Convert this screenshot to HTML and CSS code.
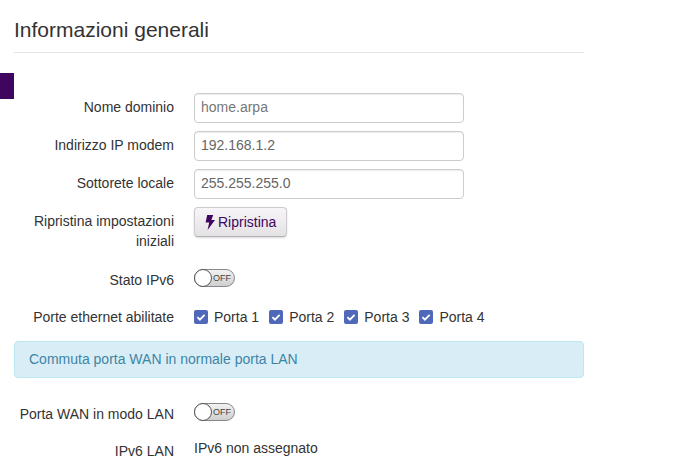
FILE: index.html
```html
<!DOCTYPE html>
<html lang="en">
<head>
    <meta charset="UTF-8">
    <meta name="viewport" content="width=device-width, initial-scale=1.0">
    <title>Informazioni generali</title>
    <link rel="stylesheet" href="styles.css">
</head>
<body>
    <div class="side-tab"></div>
    <div class="content">
        <h2 class="title">Informazioni generali</h2>
        <form class="form">
            <div class="row">
                <label class="label">Nome dominio</label>
                <input class="input" type="text" placeholder="home.arpa">
            </div>
            <div class="row">
                <label class="label">Indirizzo IP modem</label>
                <input class="input" type="text" value="192.168.1.2">
            </div>
            <div class="row">
                <label class="label">Sottorete locale</label>
                <input class="input" type="text" value="255.255.255.0">
            </div>
            <div class="row">
                <label class="label">Ripristina impostazioni iniziali</label>
                <button class="btn" type="button">
                    <svg class="bolt" viewBox="0 0 10 15" width="10" height="15"><path d="M2.2 0h6L6.4 5H10L2.6 15l1.6-7.4H0.6z"/></svg>
                    Ripristina
                </button>
            </div>
            <div class="row toggle-row">
                <label class="label">Stato IPv6</label>
                <div class="toggle"><span class="knob"></span><span class="off">OFF</span></div>
            </div>
            <div class="row ports-row">
                <label class="label">Porte ethernet abilitate</label>
                <div class="ports">
                    <span class="port"><svg class="check" viewBox="0 0 14 14" width="14" height="14"><rect width="14" height="14" rx="2"/><path d="M3.4 7.2l2.5 2.5 4.7-4.8"/></svg>Porta 1</span>
                    <span class="port"><svg class="check" viewBox="0 0 14 14" width="14" height="14"><rect width="14" height="14" rx="2"/><path d="M3.4 7.2l2.5 2.5 4.7-4.8"/></svg>Porta 2</span>
                    <span class="port"><svg class="check" viewBox="0 0 14 14" width="14" height="14"><rect width="14" height="14" rx="2"/><path d="M3.4 7.2l2.5 2.5 4.7-4.8"/></svg>Porta 3</span>
                    <span class="port"><svg class="check" viewBox="0 0 14 14" width="14" height="14"><rect width="14" height="14" rx="2"/><path d="M3.4 7.2l2.5 2.5 4.7-4.8"/></svg>Porta 4</span>
                </div>
            </div>
            <div class="alert">Commuta porta WAN in normale porta LAN</div>
            <div class="row toggle-row wan-row">
                <label class="label">Porta WAN in modo LAN</label>
                <div class="toggle"><span class="knob"></span><span class="off">OFF</span></div>
            </div>
            <div class="row lan-row">
                <label class="label">IPv6 LAN</label>
                <span class="value">IPv6 non assegnato</span>
            </div>
        </form>
    </div>
</body>
</html>
```

FILE: styles.css
```css
html, body { height: 100%; overflow: hidden; }
body { margin: 0; background: #fff; color: #333; font-family: "Liberation Sans", Arial, sans-serif; font-size: 14px; line-height: 20px; position: relative; }
.side-tab { position: absolute; left: 0; top: 73px; width: 14px; height: 26px; background: #40065f; }
.content { width: 570px; margin-left: 14px; }
.title { margin: 0; padding: 18px 0 11px; height: 23px; line-height: 23px; font-size: 21px; font-weight: 400; border-bottom: 1px solid #e5e5e5; }
.form { padding-top: 40px; }
.row { display: flex; margin-bottom: 8px; }
.label { flex: none; width: 180px; padding: 4px 20px 0 0; box-sizing: border-box; text-align: right; }
.input { width: 270px; height: 30px; box-sizing: border-box; padding: 3px 6px 5px; border: 1px solid #ccc; border-radius: 4px; font: inherit; color: #666; background: #fff; box-shadow: inset 0 1px 1px rgba(0,0,0,.075); }
.input::placeholder { color: #777; opacity: 1; }
.btn { display: flex; align-items: center; gap: 3px; width: 93px; height: 30px; padding: 0 0 0 10px; border: 1px solid #ccc; border-bottom-color: #b3b3b3; border-radius: 4px; background: linear-gradient(#f7f5f7, #e4e2e4); color: #40065f; font: inherit; box-shadow: 0 1px 2px rgba(0,0,0,.15); }
.bolt { fill: #40065f; }
.toggle-row { align-items: center; margin-top: 15px; }
.toggle { width: 41px; height: 18px; box-sizing: border-box; border: 1px solid #888; border-radius: 9px; background: linear-gradient(#f2f2f2, #cfcfcf); position: relative; }
.knob { position: absolute; left: -1px; top: -1px; width: 18px; height: 18px; box-sizing: border-box; border: 1px solid #555; border-radius: 50%; background: #fff; }
.off { position: absolute; left: 18px; top: 0; font-size: 9px; line-height: 16px; color: #444; }
.ports-row { margin-top: 12px; margin-bottom: 14px; }
.ports-row .label { padding-top: 5px; }
.ports { display: flex; gap: 10px; padding-top: 5px; }
.port { display: flex; align-items: center; gap: 6px; }
.check rect { fill: #4f68b9; }
.check path { fill: none; stroke: #fff; stroke-width: 1.8; }
.alert { height: 37px; box-sizing: border-box; padding: 7px 14px; border: 1px solid #bce8f1; border-radius: 4px; background: #d9edf7; color: #3d85a5; }
.wan-row { margin-top: 22px; }
.lan-row { margin-top: 14px; }
.lan-row .label { padding-top: 3px; }
```
